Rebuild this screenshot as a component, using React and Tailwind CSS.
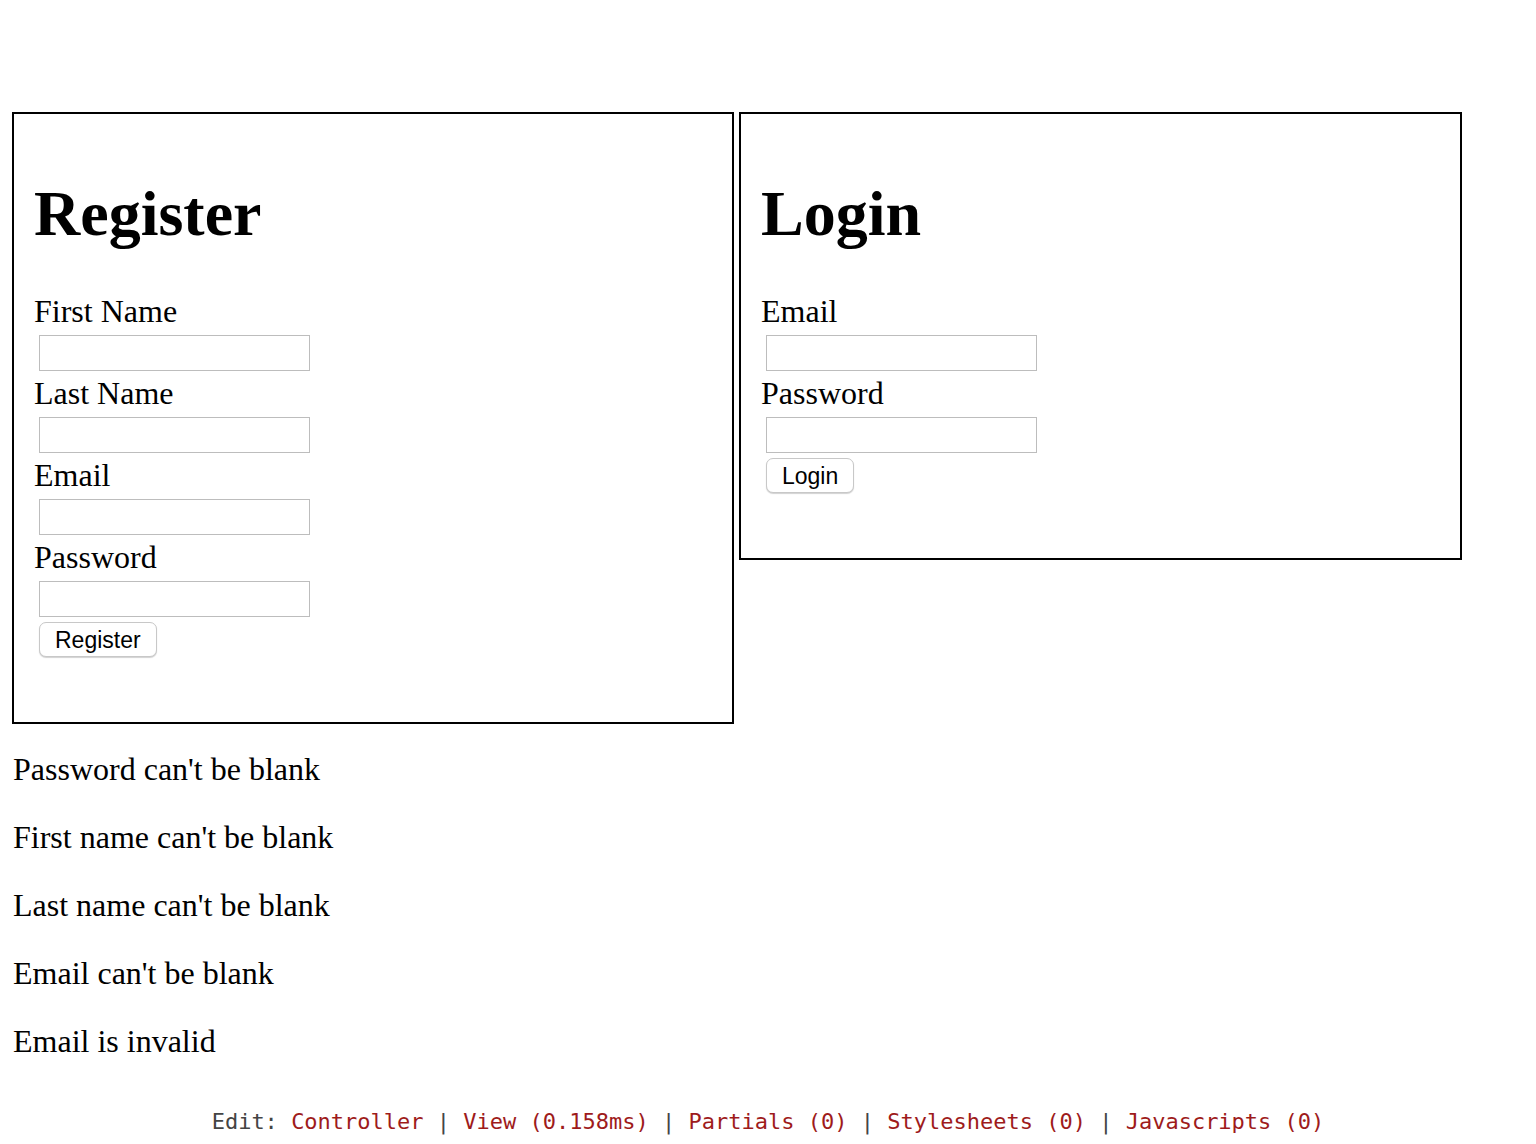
import React from 'react'

const serif = "font-['Liberation_Serif','Times_New_Roman',serif]"

function Field({ label, type = 'text' }) {
  return (
    <>
      <label className="block text-[32px] leading-[34px]">{label}</label>
      <input
        type={type}
        className="ml-[5px] mt-[7px] mb-[5px] block h-[36px] w-[271px] border border-[#bdbdbd] bg-white outline-none"
      />
    </>
  )
}

function Panel({ title, width, fields, button }) {
  return (
    <div className={`${width} border-2 border-black px-[20px] pt-[20px] pb-[65px]`}>
      <h1 className="my-[43px] text-[64px] font-bold leading-[74px]">{title}</h1>
      <form onSubmit={(e) => e.preventDefault()}>
        {fields.map((f) => (
          <Field key={f.label} label={f.label} type={f.type} />
        ))}
        <button
          type="submit"
          className="ml-[5px] block h-[35px] rounded-[7px] border border-[#c8c8c8] bg-white px-[15px] font-['Liberation_Sans',Arial,sans-serif] text-[23px] leading-[34px] text-black shadow-[0_1px_1px_rgba(0,0,0,0.18)]"
        >
          {button}
        </button>
      </form>
    </div>
  )
}

const errors = [
  "Password can't be blank",
  "First name can't be blank",
  "Last name can't be blank",
  "Email can't be blank",
  'Email is invalid',
]

export default function App() {
  return (
    <div className={`min-h-screen bg-white text-black ${serif}`}>
      <div className="flex items-start gap-[5px] pl-[12px] pt-[112px]">
        <Panel
          title="Register"
          width="w-[722px]"
          fields={[
            { label: 'First Name' },
            { label: 'Last Name' },
            { label: 'Email' },
            { label: 'Password', type: 'password' },
          ]}
          button="Register"
        />
        <Panel
          title="Login"
          width="w-[723px]"
          fields={[{ label: 'Email' }, { label: 'Password', type: 'password' }]}
          button="Login"
        />
      </div>

      <div className="pl-[13px] pt-[27px]">
        {errors.map((msg) => (
          <p key={msg} className="mb-[32px] text-[32px] leading-[36px]">
            {msg}
          </p>
        ))}
      </div>

      <div className="pt-[18px] text-center font-['DejaVu_Sans_Mono','Liberation_Mono',monospace] text-[22px] leading-[26px] text-[#444]">
        Edit: <a className="text-[#9e1b1b]">Controller</a> | <a className="text-[#9e1b1b]">View (0.158ms)</a> |{' '}
        <a className="text-[#9e1b1b]">Partials (0)</a> | <a className="text-[#9e1b1b]">Stylesheets (0)</a> |{' '}
        <a className="text-[#9e1b1b]">Javascripts (0)</a>
      </div>
    </div>
  )
}
